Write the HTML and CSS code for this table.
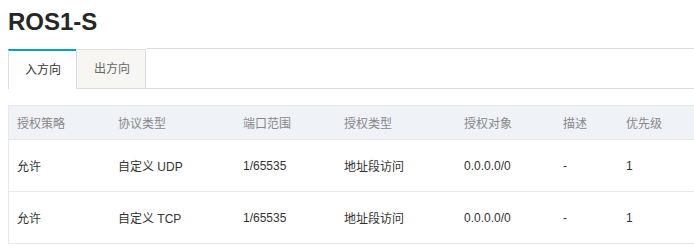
FILE: index.html
```html
<!DOCTYPE html>
<html lang="zh-CN">
<head>
    <meta charset="UTF-8">
    <title>ROS1-S</title>
    <link rel="stylesheet" href="styles.css">
</head>
<body>

<h1 class="title">ROS1-S</h1>

<div class="tabs">
    <div class="tab active">入方向</div>
    <div class="tab">出方向</div>
    <div class="tab-fill"></div>
</div>

<table class="rules">
    <colgroup>
        <col class="c1">
        <col class="c2">
        <col class="c3">
        <col class="c4">
        <col class="c5">
        <col class="c6">
        <col class="c7">
    </colgroup>
    <thead>
    <tr>
        <th>授权策略</th>
        <th>协议类型</th>
        <th>端口范围</th>
        <th>授权类型</th>
        <th>授权对象</th>
        <th>描述</th>
        <th>优先级</th>
    </tr>
    </thead>
    <tbody>
    <tr>
        <td>允许</td>
        <td>自定义 UDP</td>
        <td>1/65535</td>
        <td>地址段访问</td>
        <td>0.0.0.0/0</td>
        <td>-</td>
        <td>1</td>
    </tr>
    <tr>
        <td>允许</td>
        <td>自定义 TCP</td>
        <td>1/65535</td>
        <td>地址段访问</td>
        <td>0.0.0.0/0</td>
        <td>-</td>
        <td>1</td>
    </tr>
    </tbody>
</table>

</body>
</html>
```

FILE: styles.css
```css
html,body{
    height: 100%;
}
body{
    margin: 8px 0 0 8px;
    background: #fff;
    font-family: "Liberation Sans", "Noto Sans CJK SC", sans-serif;
    font-size: 12px;
    color: #333;
}

.title{
    margin: 0;
    font-size: 24px;
    line-height: 28px;
    font-weight: bold;
    color: #262626;
}

/* tabs */
.tabs{
    display: flex;
    margin-top: 12px;
}

.tab{
    margin-top: 1px;
    line-height: 38px;
    box-sizing: border-box;
}

.tab.active{
    height: 40px;
    padding: 0 15px 0 16px;
    border-left: 1px solid #ddd;
    border-top: 2px solid #00a2ca;
    background: #fff;
    color: #333;
}

.tab:not(.active){
    height: 40px;
    padding: 0 15px 0 17px;
    border: 1px solid #ddd;
    background: #f7f6f3;
    color: #666;
}

.tab-fill{
    flex: 1;
    height: 41px;
    box-sizing: border-box;
    border-top: 1px solid #ddd;
    border-bottom: 1px solid #ddd;
}

/* table */
.rules{
    width: 100%;
    margin-top: 16px;
    border-collapse: separate;
    border-spacing: 0;
    border-left: 1px solid #e6e9ee;
    table-layout: fixed;
}

.c1{ width: 100px; }
.c2{ width: 125px; }
.c3{ width: 101px; }
.c4{ width: 120px; }
.c5{ width: 99px; }
.c6{ width: 63px; }

.rules th,
.rules td{
    padding: 0 0 0 9px;
    text-align: left;
    white-space: nowrap;
    border-bottom: 1px solid #e6e9ee;
}

.rules th:first-child,
.rules td:first-child{
    padding-left: 8px;
}

.rules th{
    height: 33px;
    background: #eff2f7;
    border-top: 1px solid #e6e9ee;
    font-weight: normal;
    color: #888;
}

.rules td{
    height: 51px;
    color: #333;
}
```
